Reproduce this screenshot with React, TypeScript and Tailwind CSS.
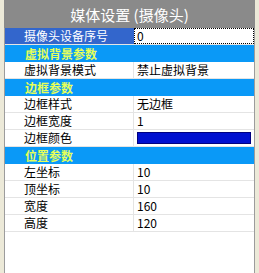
import React from "react";

type Row =
  | { kind: "cat"; label: string }
  | { kind: "item"; label: string; value?: string; color?: boolean; selected?: boolean };

const rows: Row[] = [
  { kind: "item", label: "摄像头设备序号", value: "0", selected: true },
  { kind: "cat", label: "虚拟背景参数" },
  { kind: "item", label: "虚拟背景模式", value: "禁止虚拟背景" },
  { kind: "cat", label: "边框参数" },
  { kind: "item", label: "边框样式", value: "无边框" },
  { kind: "item", label: "边框宽度", value: "1" },
  { kind: "item", label: "边框颜色", color: true },
  { kind: "cat", label: "位置参数" },
  { kind: "item", label: "左坐标", value: "10" },
  { kind: "item", label: "顶坐标", value: "10" },
  { kind: "item", label: "宽度", value: "160" },
  { kind: "item", label: "高度", value: "120" },
];

const font = { fontFamily: '"Noto Sans CJK SC", "Liberation Sans", sans-serif' };

export default function App() {
  return (
    <div
      className="w-[259px] h-[273px] bg-[#ece9d8] flex pl-[4px] pr-[4px] overflow-hidden"
      style={font}
    >
      <div className="flex flex-col w-[251px]">
        <div className="h-[28px] bg-[#8a8a8a] text-white text-[15px] flex items-center justify-center leading-none">
          媒体设置 (摄像头)
        </div>
        <div className="flex-1 bg-white border-l border-r border-[#9c9c9c] flex flex-col">
          {rows.map((r, i) =>
            r.kind === "cat" ? (
              <div
                key={i}
                className="h-[17px] bg-[#0a99f7] flex items-center pl-[20px] text-[12px] font-bold text-[#e6ff59] leading-none"
              >
                {r.label}
              </div>
            ) : (
              <div key={i} className="h-[17px] flex border-b border-[#e4e4e4] text-[12px] leading-none">
                <div
                  className={
                    r.selected
                      ? "w-[129px] bg-[#3366cc] text-white flex items-center pl-[19px]"
                      : "w-[129px] text-black flex items-center pl-[19px] border-r border-[#e4e4e4]"
                  }
                >
                  {r.label}
                </div>
                <div
                  className={
                    r.selected
                      ? "flex-1 flex items-center pl-[2px] border border-dotted border-black text-black"
                      : "flex-1 flex items-center pl-[3px] text-black"
                  }
                >
                  {r.color ? (
                    <div className="w-[114px] h-[12px] bg-[#0010d0] border border-[#000080]" />
                  ) : (
                    r.value
                  )}
                </div>
              </div>
            )
          )}
        </div>
      </div>
    </div>
  );
}
